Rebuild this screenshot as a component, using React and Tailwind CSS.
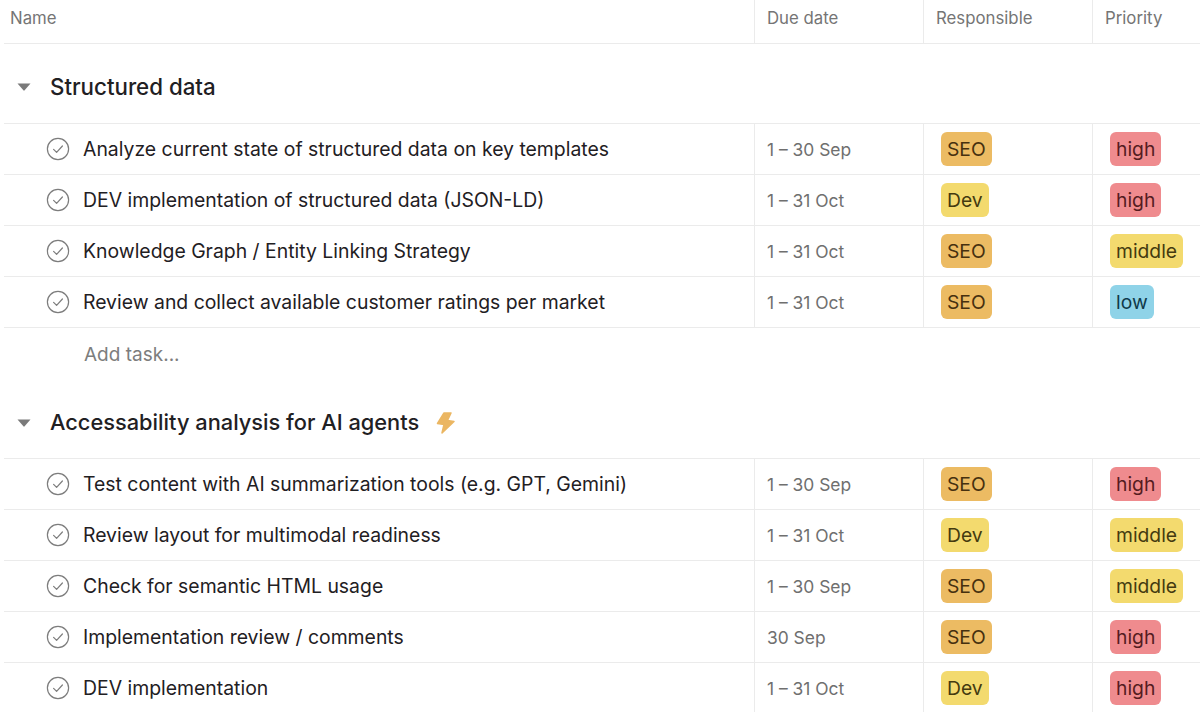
const C = {
  SEO: "bg-[#ecbb63] text-[#46300f]",
  Dev: "bg-[#f3da6e] text-[#443a10]",
  high: "bg-[#ef8b8e] text-[#551c1f]",
  middle: "bg-[#f3da6e] text-[#443a10]",
  low: "bg-[#8fd3e8] text-[#0f3a4a]",
};

function Check() {
  return (
    <svg width="24" height="24" viewBox="0 0 24 24" fill="none" className="shrink-0">
      <circle cx="12" cy="12" r="10.6" stroke="#7d7d7d" strokeWidth="1.2" />
      <path d="M7.6 12.4l3 3 5.8-6.4" stroke="#7d7d7d" strokeWidth="1.2" strokeLinecap="round" strokeLinejoin="round" />
    </svg>
  );
}

function Caret() {
  return (
    <svg width="14" height="8" viewBox="0 0 14 8" className="shrink-0">
      <path d="M0.5 0.5h13L7.6 7.3a.8.8 0 0 1-1.2 0z" fill="#7a7a7a" />
    </svg>
  );
}

function Bolt() {
  return (
    <svg width="20" height="24" viewBox="0 0 20 24" className="shrink-0 -ml-[2px]">
      <path d="M8 2L1.5 12.5l6.5 1L6 22 18 10.5l-6.5-1L15 2z" fill="#ebb662" stroke="#ebb662" strokeWidth="1.5" strokeLinejoin="round" />
    </svg>
  );
}

function Tag({ label }) {
  return (
    <span className={`h-[34px] px-[6px] pt-px flex items-center rounded-md text-[19.3px] ${C[label]}`}>
      {label}
    </span>
  );
}

function Row({ name, due, who, pri }) {
  return (
    <div className="flex h-[51px] border-b border-[#ebebeb] ml-1 text-[#1f2023]">
      <div className="w-[750px] flex items-center pl-[42px] gap-[13px] text-[19.4px]">
        <Check />
        <span className="pt-[2px]">{name}</span>
      </div>
      <div className="w-[169px] border-l border-[#ebebeb] pl-3 pt-[2px] flex items-center text-[17.4px] text-[#6f6f6f]">{due}</div>
      <div className="w-[169px] border-l border-[#ebebeb] pl-[17px] flex items-center"><Tag label={who} /></div>
      <div className="flex-1 border-l border-[#ebebeb] pl-[17px] flex items-center"><Tag label={pri} /></div>
    </div>
  );
}

function Section({ title, bolt, h, size }) {
  return (
    <div className={`flex items-center ml-1 border-b border-[#ebebeb] pl-[13px] pt-[7px] gap-[19px] text-[#1f2023] ${h}`}>
      <Caret />
      <span className={`font-medium ${size}`}>{title}</span>
      {bolt && <Bolt />}
    </div>
  );
}

const first = [
  ["Analyze current state of structured data on key templates", "1 – 30 Sep", "SEO", "high"],
  ["DEV implementation of structured data (JSON-LD)", "1 – 31 Oct", "Dev", "high"],
  ["Knowledge Graph / Entity Linking Strategy", "1 – 31 Oct", "SEO", "middle"],
  ["Review and collect available customer ratings per market", "1 – 31 Oct", "SEO", "low"],
];
const second = [
  ["Test content with AI summarization tools (e.g. GPT, Gemini)", "1 – 30 Sep", "SEO", "high"],
  ["Review layout for multimodal readiness", "1 – 31 Oct", "Dev", "middle"],
  ["Check for semantic HTML usage", "1 – 30 Sep", "SEO", "middle"],
  ["Implementation review / comments", "30 Sep", "SEO", "high"],
  ["DEV implementation", "1 – 31 Oct", "Dev", "high"],
];

export default function App() {
  return (
    <div className="w-[1200px] h-[712px] overflow-hidden bg-white font-['Inter',sans-serif]">
      <div className="flex h-11 ml-1 border-b border-[#ebebeb] text-[16.8px] text-[#757575]">
        <div className="w-[750px] pl-[6px] pt-[6px]">Name</div>
        <div className="w-[169px] border-l border-[#ebebeb] pl-3 pt-[6px]">Due date</div>
        <div className="w-[169px] border-l border-[#ebebeb] pl-3 pt-[6px]">Responsible</div>
        <div className="flex-1 border-l border-[#ebebeb] pl-3 pt-[6px]">Priority</div>
      </div>
      <Section title="Structured data" h="h-[80px]" size="text-[22.3px]" />
      {first.map((r) => <Row key={r[0]} name={r[0]} due={r[1]} who={r[2]} pri={r[3]} />)}
      <div className="h-[52px] flex items-center pl-[84px] pt-[2px] text-[19px] text-[#7d7d7d]">Add task...</div>
      <Section title="Accessability analysis for AI agents" bolt h="h-[79px]" size="text-[21.8px]" />
      {second.map((r) => <Row key={r[0]} name={r[0]} due={r[1]} who={r[2]} pri={r[3]} />)}
    </div>
  );
}
